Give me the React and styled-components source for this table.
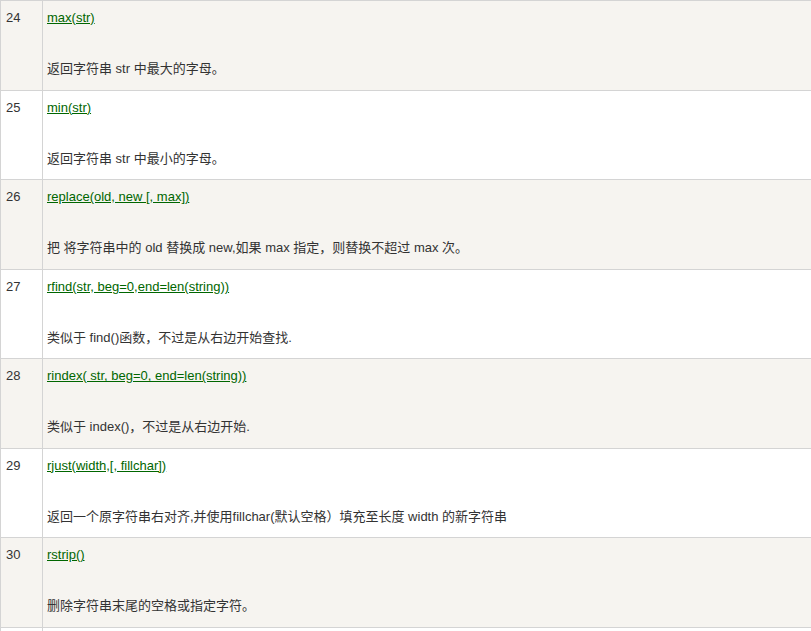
import styled, { createGlobalStyle } from "styled-components";

const rows = [
  { no: 24, name: "max(str)", desc: "返回字符串 str 中最大的字母。" },
  { no: 25, name: "min(str)", desc: "返回字符串 str 中最小的字母。" },
  {
    no: 26,
    name: "replace(old, new [, max])",
    desc: "把 将字符串中的 old 替换成 new,如果 max 指定，则替换不超过 max 次。",
  },
  {
    no: 27,
    name: "rfind(str, beg=0,end=len(string))",
    desc: "类似于 find()函数，不过是从右边开始查找.",
  },
  {
    no: 28,
    name: "rindex( str, beg=0, end=len(string))",
    desc: "类似于 index()，不过是从右边开始.",
  },
  {
    no: 29,
    name: "rjust(width,[, fillchar])",
    desc: "返回一个原字符串右对齐,并使用fillchar(默认空格）填充至长度 width 的新字符串",
  },
  { no: 30, name: "rstrip()", desc: "删除字符串末尾的空格或指定字符。" },
  {
    no: 31,
    name: 'split(str="", num=string.count(str))',
    desc: "以 str 为分隔符截取字符串，如果 num 有指定值，则仅截取 num+1 个子字符串",
  },
];

const GlobalStyle = createGlobalStyle`
  html, body {
    margin: 0;
    padding: 0;
    overflow: hidden;
    background: #fff;
  }
  body {
    font-family: "Liberation Sans", Arial, "Noto Sans CJK SC", sans-serif;
    font-size: 13px;
    color: #333;
  }
`;

const Table = styled.div`
  width: 830px;
  border-top: 1px solid #d4d4d4;
  border-left: 1px solid #d4d4d4;
`;

const Row = styled.div`
  display: grid;
  grid-template-columns: 42px 1fr;
  border-bottom: 1px solid #d4d4d4;
  background: ${(props) => (props.$odd ? "#f6f4f0" : "#ffffff")};
`;

const NumCell = styled.div`
  border-right: 1px solid #d4d4d4;
  padding: 7px 5px 0 5px;
  line-height: 20px;
`;

const MethodCell = styled.div`
  padding: 7px 5px 10.57px 4px;
  line-height: 20px;
`;

const Name = styled.div`
  height: 20px;
  a {
    color: #006600;
    text-decoration: underline;
  }
`;

const Desc = styled.div`
  margin-top: 31px;
  height: 20px;
  white-space: nowrap;
`;

export default function App() {
  return (
    <>
      <GlobalStyle />
      <Table>
        {rows.map((r) => (
          <Row key={r.no} $odd={r.no % 2 === 0}>
            <NumCell>{r.no}</NumCell>
            <MethodCell>
              <Name>
                <a href="#">{r.name}</a>
              </Name>
              <Desc>{r.desc}</Desc>
            </MethodCell>
          </Row>
        ))}
      </Table>
    </>
  );
}
